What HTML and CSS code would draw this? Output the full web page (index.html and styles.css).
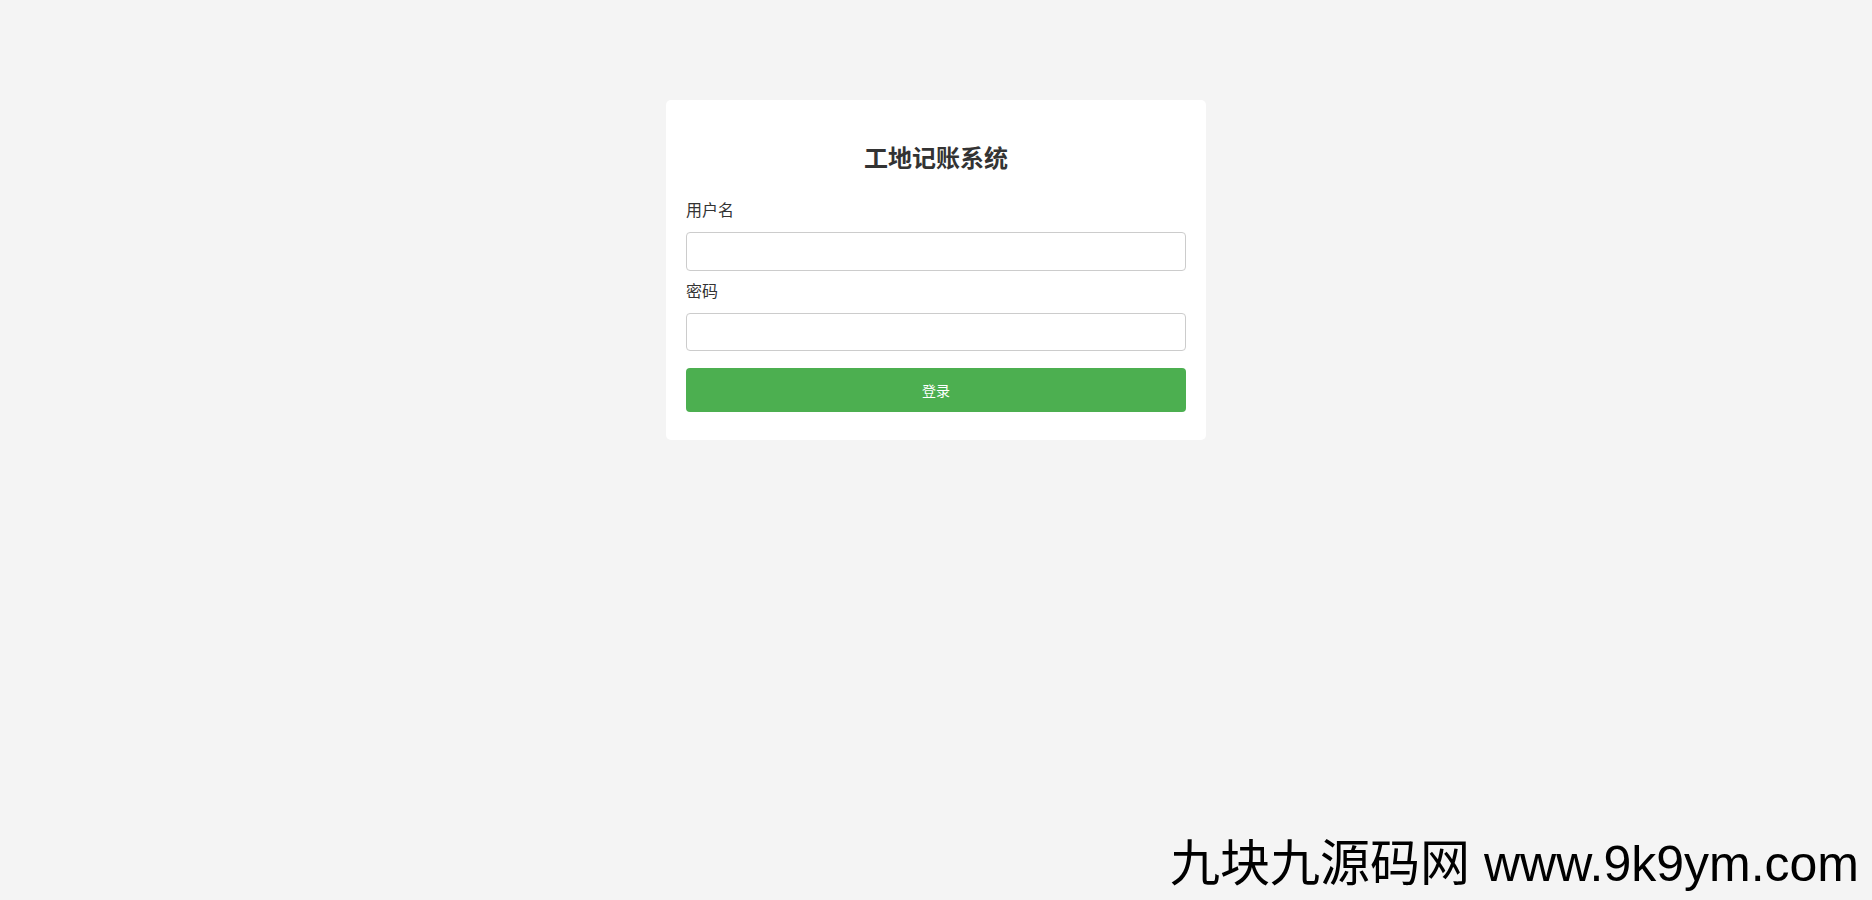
FILE: index.html
```
<!DOCTYPE html>
<html lang="zh-CN">
<head>
<meta charset="UTF-8">
<title>工地记账系统</title>
<link rel="stylesheet" href="styles.css">
</head>
<body>
<div class="login-container">
  <h2 class="title">工地记账系统</h2>
  <form class="login-form">
    <div class="form-group">
      <label class="field-label" for="username">用户名</label>
      <input class="field-input" type="text" id="username">
    </div>
    <div class="form-group">
      <label class="field-label" for="password">密码</label>
      <input class="field-input" type="password" id="password">
    </div>
    <button class="login-btn" type="button">登录</button>
  </form>
</div>
<div class="watermark">九块九源码网 www.9k9ym.com</div>
</body>
</html>
```
FILE: styles.css
```
html, body {
  margin: 0;
  padding: 0;
}
body {
  background: #f4f4f4;
  font-family: "Liberation Sans", "Noto Sans CJK SC", sans-serif;
  color: #333;
  min-height: 900px;
}
.login-container {
  width: 500px;
  margin: 0 auto;
  position: relative;
  top: 100px;
  background: #fff;
  padding: 20px;
  border-radius: 5px;
}
.title {
  margin: 20px 0 22px;
  font-size: 24px;
  line-height: 38px;
  font-weight: bold;
  text-align: center;
  color: #333;
}
.login-form {
  margin: 0 0 8px;
}
.form-group {
  margin-bottom: 10px;
}
.field-label {
  display: block;
  font-size: 16px;
  line-height: 22px;
  margin-bottom: 10px;
  color: #333;
}
.field-input {
  display: block;
  width: 100%;
  height: 38.5px;
  box-sizing: border-box;
  padding: 10px;
  border: 1px solid #ccc;
  border-radius: 4px;
  background: #fff;
  font-size: 14px;
  outline: none;
}
.login-btn {
  display: block;
  width: 100%;
  height: 44px;
  margin-top: 16.5px;
  border: none;
  border-radius: 4px;
  background: #4caf50;
  color: #fff;
  font-family: "Liberation Sans", "Noto Sans CJK SC", sans-serif;
  font-size: 14px;
  padding: 0;
  cursor: pointer;
}
.watermark {
  position: fixed;
  right: 13px;
  bottom: 11px;
  font-family: "Liberation Sans", "Noto Sans CJK SC", sans-serif;
  font-size: 50px;
  line-height: 50px;
  color: #000;
  white-space: nowrap;
}
```
